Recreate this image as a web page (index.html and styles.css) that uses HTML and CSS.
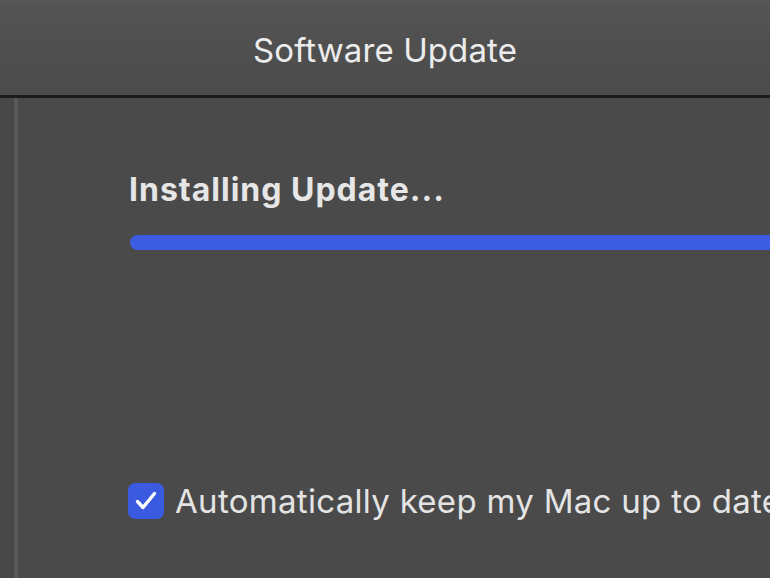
FILE: index.html
```html
<!DOCTYPE html>
<html>
<head>
<meta charset="utf-8">
<link rel="stylesheet" href="styles.css">
</head>
<body>
<div class="window">
  <header class="titlebar">
    <span class="title">Software Update</span>
  </header>
  <div class="main">
    <div class="sidebar"></div>
    <div class="divider"></div>
    <section class="content">
      <h1 class="status">Installing Update...</h1>
      <div class="progress"><div class="progress-fill"></div></div>
      <label class="auto">
        <span class="checkbox">
          <svg viewBox="0 0 36 36" width="36" height="36"><path d="M9.5 18.5 L15 24.5 L26.5 10.5" fill="none" stroke="#ffffff" stroke-width="3.4" stroke-linecap="round" stroke-linejoin="round"/></svg>
        </span>
        <span class="auto-text">Automatically keep my Mac up to date</span>
      </label>
    </section>
  </div>
</div>
</body>
</html>
```
FILE: styles.css
```css
html, body {
  margin: 0;
  padding: 0;
  width: 770px;
  height: 578px;
  overflow: hidden;
  background: #4a4a4a;
}
.window {
  display: flex;
  flex-direction: column;
  width: 770px;
  height: 578px;
  font-family: Inter, "Liberation Sans", sans-serif;
}
.titlebar {
  height: 95px;
  flex: none;
  display: flex;
  align-items: center;
  justify-content: center;
  background: linear-gradient(#5a5a5a 0px, #555555 3px, #505050 40px, #4c4c4c 95px);
  border-bottom: 3px solid #1c1c1c;
  box-sizing: content-box;
}
.title {
  color: #ececec;
  font-size: 33px;
  font-weight: 400;
  letter-spacing: 0.1px;
  margin-top: 4px;
}
.main {
  flex: 1;
  display: flex;
  background: #4a4a4a;
}
.sidebar {
  width: 14px;
  background: #474747;
  flex: none;
}
.divider {
  width: 4px;
  background: #585858;
  flex: none;
}
.content {
  flex: 1;
  padding-left: 110px;
  display: flex;
  flex-direction: column;
  overflow: hidden;
}
.status {
  margin: 74px 0 0 1px;
  color: #e6e6e6;
  font-size: 32px;
  font-weight: 700;
  letter-spacing: 1px;
  line-height: 36px;
  white-space: nowrap;
}
.progress {
  margin-top: 27px;
  margin-left: 2px;
  height: 15px;
  width: 700px;
  border-radius: 8px;
  overflow: hidden;
}
.progress-fill {
  width: 100%;
  height: 100%;
  background: #3c5ce2;
}
.auto {
  margin-top: 231px;
  display: flex;
  align-items: center;
  gap: 11px;
  white-space: nowrap;
}
.checkbox {
  width: 36px;
  height: 36px;
  flex: none;
  border-radius: 7px;
  background: #3a5ae0;
  display: block;
}
.checkbox svg { display: block; }
.auto-text {
  color: #e4e4e4;
  font-size: 33px;
  font-weight: 400;
  letter-spacing: 0.3px;
}
```
